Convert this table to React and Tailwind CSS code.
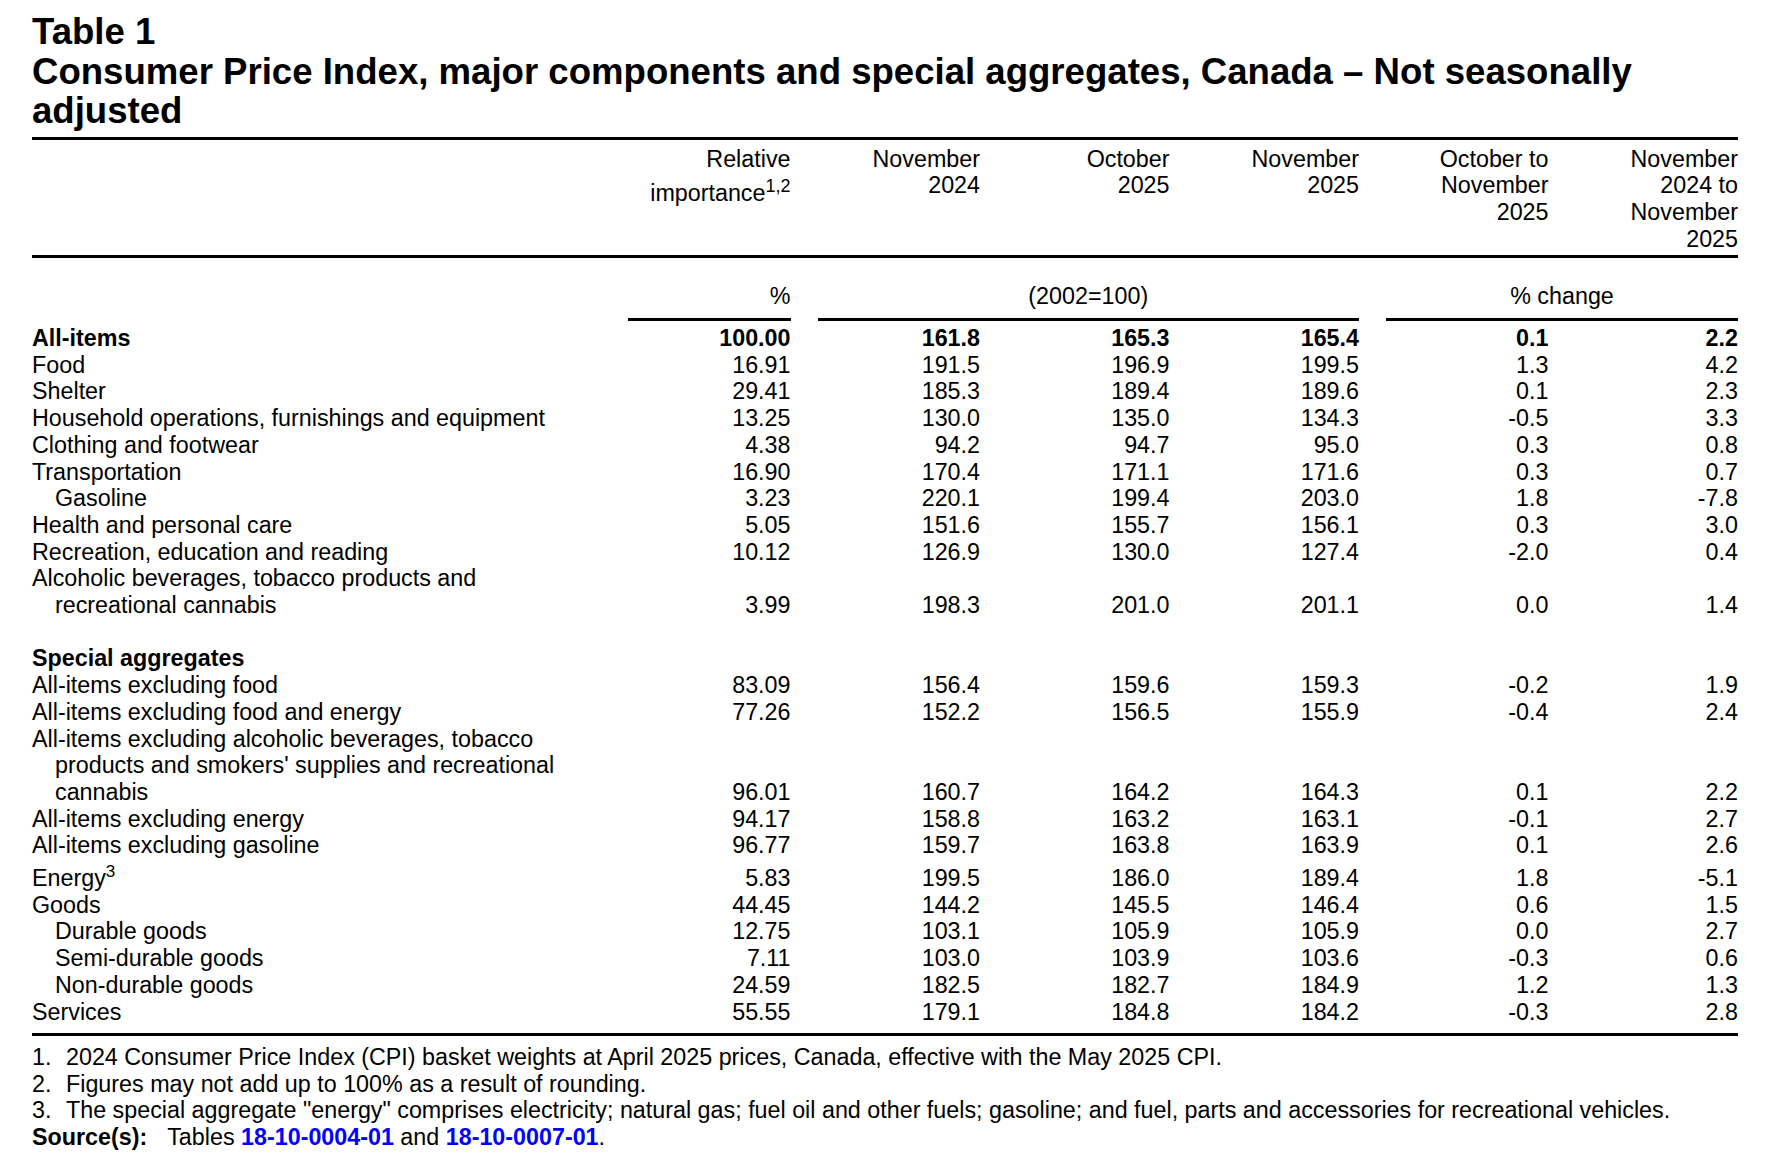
import React from "react";

const rows = [
  { label: "All-items", vals: ["100.00", "161.8", "165.3", "165.4", "0.1", "2.2"], bold: true },
  { label: "Food", vals: ["16.91", "191.5", "196.9", "199.5", "1.3", "4.2"] },
  { label: "Shelter", vals: ["29.41", "185.3", "189.4", "189.6", "0.1", "2.3"] },
  { label: "Household operations, furnishings and equipment", vals: ["13.25", "130.0", "135.0", "134.3", "-0.5", "3.3"] },
  { label: "Clothing and footwear", vals: ["4.38", "94.2", "94.7", "95.0", "0.3", "0.8"] },
  { label: "Transportation", vals: ["16.90", "170.4", "171.1", "171.6", "0.3", "0.7"] },
  { label: "Gasoline", indent: true, vals: ["3.23", "220.1", "199.4", "203.0", "1.8", "-7.8"] },
  { label: "Health and personal care", vals: ["5.05", "151.6", "155.7", "156.1", "0.3", "3.0"] },
  { label: "Recreation, education and reading", vals: ["10.12", "126.9", "130.0", "127.4", "-2.0", "0.4"] },
  { lines: ["Alcoholic beverages, tobacco products and", "recreational cannabis"], vals: ["3.99", "198.3", "201.0", "201.1", "0.0", "1.4"] },
  { blank: true },
  { label: "Special aggregates", boldLabel: true, vals: ["", "", "", "", "", ""] },
  { label: "All-items excluding food", vals: ["83.09", "156.4", "159.6", "159.3", "-0.2", "1.9"] },
  { label: "All-items excluding food and energy", vals: ["77.26", "152.2", "156.5", "155.9", "-0.4", "2.4"] },
  { lines: ["All-items excluding alcoholic beverages, tobacco", "products and smokers' supplies and recreational", "cannabis"], vals: ["96.01", "160.7", "164.2", "164.3", "0.1", "2.2"] },
  { label: "All-items excluding energy", vals: ["94.17", "158.8", "163.2", "163.1", "-0.1", "2.7"] },
  { label: "All-items excluding gasoline", vals: ["96.77", "159.7", "163.8", "163.9", "0.1", "2.6"] },
  { label: "Energy", sup: "3", vals: ["5.83", "199.5", "186.0", "189.4", "1.8", "-5.1"] },
  { label: "Goods", vals: ["44.45", "144.2", "145.5", "146.4", "0.6", "1.5"] },
  { label: "Durable goods", indent: true, vals: ["12.75", "103.1", "105.9", "105.9", "0.0", "2.7"] },
  { label: "Semi-durable goods", indent: true, vals: ["7.11", "103.0", "103.9", "103.6", "-0.3", "0.6"] },
  { label: "Non-durable goods", indent: true, vals: ["24.59", "182.5", "182.7", "184.9", "1.2", "1.3"] },
  { label: "Services", vals: ["55.55", "179.1", "184.8", "184.2", "-0.3", "2.8"] },
];

const grid = "grid grid-cols-[569px_189.5px_189.5px_189.5px_189.5px_189.5px_189.5px]";

function Row({ r }) {
  if (r.blank) return <div className="h-[26.7px]" />;
  return (
    <div className={`${grid} items-end ${r.bold ? "font-bold" : ""} ${r.sup ? "pt-[6px]" : ""}`}>
      <div className="whitespace-nowrap">
        {r.lines ? (
          r.lines.map((l, i) => (
            <div key={i} className={i > 0 ? "pl-[23px]" : ""}>
              {l}
            </div>
          ))
        ) : (
          <div className={`${r.indent ? "pl-[23px]" : ""} ${r.boldLabel ? "font-bold" : ""}`}>
            {r.label}
            {r.sup && <sup className="text-[17px] top-[-9px]">{r.sup}</sup>}
          </div>
        )}
      </div>
      {r.vals.map((v, i) => (
        <div key={i} className="pl-[27px] text-right">
          {v}
        </div>
      ))}
    </div>
  );
}

export default function App() {
  return (
    <div className="min-h-[1158px] w-[1776px] bg-white text-black font-['Liberation_Sans',Arial,Helvetica,sans-serif]">
      <div className="ml-[32px] w-[1706px] pt-[12px]">
        <h1 className="text-[36.6px] leading-[39.5px] font-bold whitespace-nowrap">
          Table 1
          <br />
          Consumer Price Index, major components and special aggregates, Canada – Not seasonally
          <br />
          adjusted
        </h1>

        <div className="mt-[6px] border-t-[3px] border-black" />

        <div className="text-[23.3px] leading-[26.7px]">
          {/* Header */}
          <div className={`${grid} items-start pt-[6px] pb-[3px]`}>
            <div />
            <div className="pl-[27px] text-right">
              <div>Relative</div>
              <div className="pt-[8px] whitespace-nowrap">
                importance<sup className="text-[18px] top-[-9px]">1,2</sup>
              </div>
            </div>
            <div className="pl-[27px] text-right">
              <div>November</div>
              <div>2024</div>
            </div>
            <div className="pl-[27px] text-right">
              <div>October</div>
              <div>2025</div>
            </div>
            <div className="pl-[27px] text-right">
              <div>November</div>
              <div>2025</div>
            </div>
            <div className="pl-[27px] text-right">
              <div>October to</div>
              <div>November</div>
              <div>2025</div>
            </div>
            <div className="pl-[27px] text-right">
              <div>November</div>
              <div>2024 to</div>
              <div>November</div>
              <div>2025</div>
            </div>
          </div>

          <div className="border-t-[3px] border-black" />

          {/* Units row */}
          <div className={`${grid} pt-[25px]`}>
            <div />
            <div className="pl-[27px]">
              <div className="text-right pb-[8px] border-b-[3px] border-black">%</div>
            </div>
            <div className="col-span-3 pl-[27px]">
              <div className="text-center pb-[8px] border-b-[3px] border-black">(2002=100)</div>
            </div>
            <div className="col-span-2 pl-[27px]">
              <div className="text-center pb-[8px] border-b-[3px] border-black">% change</div>
            </div>
          </div>

          {/* Body */}
          <div className="pt-[4px]">
            {rows.map((r, i) => (
              <Row key={i} r={r} />
            ))}
          </div>

          <div className="mt-[8px] border-t-[3px] border-black" />

          {/* Footnotes */}
          <div className="pt-[8px] leading-[26.4px] whitespace-nowrap">
            <div className="flex">
              <span className="w-[34px]">1.</span>
              <span>2024 Consumer Price Index (CPI) basket weights at April 2025 prices, Canada, effective with the May 2025 CPI.</span>
            </div>
            <div className="flex">
              <span className="w-[34px]">2.</span>
              <span>Figures may not add up to 100% as a result of rounding.</span>
            </div>
            <div className="flex">
              <span className="w-[34px]">3.</span>
              <span>
                The special aggregate "energy" comprises electricity; natural gas; fuel oil and other fuels; gasoline; and fuel, parts and accessories for recreational vehicles.
              </span>
            </div>
            <div className="flex">
              <span className="font-bold">Source(s):</span>
              <span className="ml-[20px]">
                Tables <span className="font-bold text-[#0000ff]">18-10-0004-01</span> and{" "}
                <span className="font-bold text-[#0000ff]">18-10-0007-01</span>.
              </span>
            </div>
          </div>
        </div>
      </div>
    </div>
  );
}
